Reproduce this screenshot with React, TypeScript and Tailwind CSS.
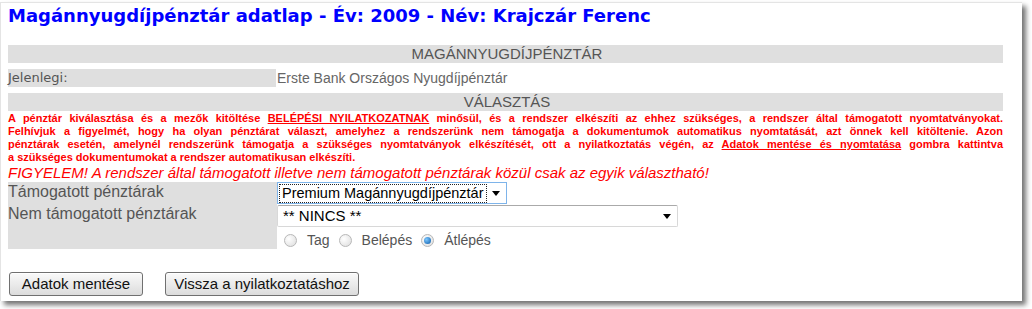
import React from 'react';

const sans = "font-['DejaVu_Sans',sans-serif]";
const arial = "font-['Liberation_Sans',Arial,sans-serif]";

function Radio({ checked, label }: { checked?: boolean; label: string }) {
  return (
    <span className="flex items-center">
      <span className="flex h-[13px] w-[13px] items-center justify-center rounded-full border border-[#b8b8b8] bg-[radial-gradient(circle_at_35%_35%,#ffffff,#dcdcdc)]">
        {checked && (
          <span className="h-[7px] w-[7px] rounded-full bg-[radial-gradient(circle_at_35%_35%,#7ec8ff,#0a5aa8)]" />
        )}
      </span>
      <span className="ml-[10px] mr-[9px] text-[14px] leading-[17px] text-[#555]">{label}</span>
    </span>
  );
}

function Arrow() {
  return (
    <svg width="8" height="5" viewBox="0 0 8 5">
      <path d="M0 0h8L4 5z" fill="#000" />
    </svg>
  );
}

function Btn({ children, w }: { children: React.ReactNode; w: string }) {
  return (
    <button
      className={`h-[24px] ${w} rounded-[3px] border border-[#707070] bg-gradient-to-b from-[#fafafa] to-[#dcdcdc] text-[15px] leading-[20px] text-[#111] shadow-[inset_0_1px_0_#fff]`}
    >
      {children}
    </button>
  );
}

export default function App() {
  const red = `text-[11px] font-bold leading-[13px] text-[#ff0000]`;
  const line = 'text-justify [text-align-last:justify] whitespace-nowrap';
  return (
    <div className={`h-[309px] w-[1032px] bg-white leading-[18px] ${arial}`}>
      <div className="mt-[2px] h-[299px] w-[1022px] border-l border-t border-[#e4e4e4] bg-white shadow-[4px_4px_5px_rgba(0,0,0,0.55)]">
        <h1 className={`${sans} ml-[7px] mt-[1px] text-[18px] font-bold leading-[24px] text-[#0000ff]`}>
          Magánnyugdíjpénztár adatlap - Év: 2009 - Név: Krajczár Ferenc
        </h1>

        <div className="ml-[7px] mt-[17px] w-[995px]">
          <div className="h-[18px] bg-[#dfdfdf] pl-[3px] text-center text-[15px] leading-[18px] text-[#555]">
            MAGÁNNYUGDÍJPÉNZTÁR
          </div>

          <div className="mt-[6px] flex h-[18px] leading-[18px] text-[#555]">
            <div className={`${sans} w-[268px] bg-[#dfdfdf] text-[13px]`}>Jelenlegi:</div>
            <div className="pl-[1px] text-[14px] text-[#666]">Erste Bank Országos Nyugdíjpénztár</div>
          </div>

          <div className="mt-[6px] h-[18px] bg-[#dfdfdf] pl-[3px] text-center text-[15px] leading-[18px] text-[#555]">
            VÁLASZTÁS
          </div>

          <div className={`mt-[1px] ${red}`}>
            <div className={line}>
              A pénztár kiválasztása és a mezők kitöltése <span className="underline">BELÉPÉSI NYILATKOZATNAK</span> minősül, és a rendszer elkészíti az ehhez szükséges, a rendszer által támogatott nyomtatványokat.
            </div>
            <div className={line}>
              Felhívjuk a figyelmét, hogy ha olyan pénztárat választ, amelyhez a rendszerünk nem támogatja a dokumentumok automatikus nyomtatását, azt önnek kell kitöltenie. Azon
            </div>
            <div className={line}>
              pénztárak esetén, amelynél rendszerünk támogatja a szükséges nyomtatványok elkészítését, ott a nyilatkoztatás végén, az <span className="underline">Adatok mentése és nyomtatása</span> gombra kattintva
            </div>
            <div>a szükséges dokumentumokat a rendszer automatikusan elkészíti.</div>
          </div>

          <div className="text-[15px] italic leading-[18px] text-[#ff0000]">
            FIGYELEM! A rendszer által támogatott illetve nem támogatott pénztárak közül csak az egyik választható!
          </div>

          <div className="flex h-[67px]">
            <div className="w-[269px] bg-[#dfdfdf] text-[16px] text-[#555]">
              <div className="leading-[20px]">Támogatott pénztárak</div>
              <div className="mt-[2px] leading-[20px]">Nem támogatott pénztárak</div>
            </div>
            <div className="flex flex-col">
              <div className="flex h-[22px] w-[230px] items-center border border-[#7eb4ea] bg-white px-[1px]">
                <span className="whitespace-nowrap border border-dotted border-[#222] px-[2px] text-[14.5px] leading-[17px] text-black">
                  Premium Magánnyugdíjpénztár
                </span>
                <span className="flex flex-1 justify-center">
                  <Arrow />
                </span>
              </div>
              <div className="mt-[1px] flex h-[22px] w-[401px] items-center justify-between rounded-[2px] border border-[#d8d8d8] border-t-[#aaa] bg-white pl-[5px] pr-[6px] text-[15px] text-black">
                <span>** NINCS **</span>
                <Arrow />
              </div>
              <div className="mt-[5px] flex items-center pl-[7px]">
                <Radio label="Tag" />
                <Radio label="Belépés" />
                <Radio checked label="Átlépés" />
              </div>
            </div>
          </div>

          <div className="mt-[23px] flex gap-[22px] pl-[1px]">
            <Btn w="w-[134px]">Adatok mentése</Btn>
            <Btn w="w-[194px]">Vissza a nyilatkoztatáshoz</Btn>
          </div>
        </div>
      </div>
    </div>
  );
}
